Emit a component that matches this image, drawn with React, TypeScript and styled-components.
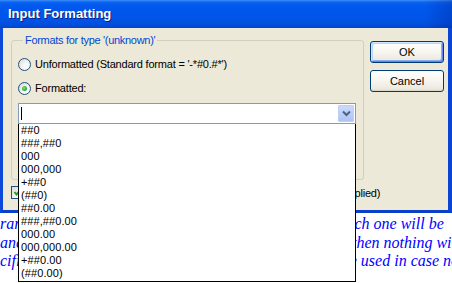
import React from "react";
import styled, { createGlobalStyle } from "styled-components";

const Global = createGlobalStyle`
  html, body { margin: 0; padding: 0; background: #ffffff; }
  * { box-sizing: border-box; }
`;

const UI = `"Liberation Sans", Arial, sans-serif`;

const Screen = styled.div`
  position: relative;
  width: 452px;
  height: 283px;
  overflow: hidden;
  background: #ffffff;
  font-family: ${UI};
  font-size: 11px;
  letter-spacing: -0.2px;
  color: #000;
`;

const Window = styled.div`
  display: flex;
  flex-direction: column;
  width: 452px;
`;

const TitleBar = styled.div`
  height: 28px;
  display: flex;
  align-items: center;
  padding: 0 0 1px 8px;
  background:
    linear-gradient(90deg, rgba(0,0,0,0) 0%, rgba(0,0,0,0) 94%, rgba(0,20,120,0.25) 100%),
    linear-gradient(180deg, #3d8ef8 0%, #0a62f0 8%, #0058ee 22%, #0055e8 60%, #0050e0 85%, #0842c8 100%);
  color: #ffffff;
  font-family: ${UI};
  font-weight: bold;
  font-size: 13px;
  letter-spacing: 0;
  text-shadow: 1px 1px 0 #0a1c8a;
`;

const Frame = styled.div`
  display: flex;
  gap: 6px;
  height: 185px;
  padding: 6px 4px 0 8px;
  background: #ece9d8;
  border-left: 3px solid #0b4ad8;
  border-right: 4px solid #0a44d2;
  border-bottom: 3px solid #0a3fc8;
`;

const MainColumn = styled.div`
  display: flex;
  flex-direction: column;
  width: 353px;
`;

const GroupBox = styled.fieldset`
  position: relative;
  margin: 0;
  height: 146px;
  padding: 5px 7px 0 6px;
  border: 1px solid #d0d0bf;
  border-radius: 3px;
  display: flex;
  flex-direction: column;
`;

const Legend = styled.legend`
  padding: 0 2px;
  margin-left: 5px;
  color: #0046d5;
  line-height: 13px;
  font-size: 11px;
  letter-spacing: -0.3px;
`;

const RadioRow = styled.label`
  display: flex;
  align-items: center;
  gap: 4px;
  height: 24px;
  white-space: nowrap;
`;

const RadioCircle = styled.span<{ $checked?: boolean }>`
  position: relative;
  width: 13px;
  height: 13px;
  flex: none;
  border-radius: 50%;
  border: 1px solid #1c5180;
  background: radial-gradient(circle at 65% 65%, #ffffff 0%, #f3f3ef 40%, #d6d5cc 100%);
  &::after {
    content: "";
    display: ${(p) => (p.$checked ? "block" : "none")};
    position: absolute;
    left: 3px;
    top: 3px;
    width: 5px;
    height: 5px;
    border-radius: 50%;
    background: radial-gradient(circle at 40% 40%, #8ae08a 0%, #3cb33c 50%, #1e8f1e 100%);
  }
`;

const ComboWrap = styled.div`
  position: relative;
  margin-top: 3px;
`;

const Combo = styled.div`
  display: flex;
  align-items: center;
  height: 21px;
  border: 1px solid #7f9db9;
  background: #ffffff;
  padding: 1px 1px 1px 2px;
`;

const Caret = styled.span`
  width: 1px;
  height: 13px;
  background: #000;
  margin-right: auto;
`;

const DropButton = styled.span`
  width: 16px;
  height: 17px;
  display: flex;
  align-items: center;
  justify-content: center;
  border-radius: 1px;
  background: linear-gradient(180deg, #cbd9fb 0%, #bccff8 50%, #aec4f4 100%);
  border: 1px solid #bfd0f6;
`;

const DropList = styled.ul`
  position: absolute;
  left: 0;
  top: 100%;
  margin: 0;
  width: 100%;
  height: 158px;
  list-style: none;
  padding: 0 0 0 2px;
  border: 1px solid #000;
  border-top: 0;
  background: #ffffff;
  z-index: 5;
`;

const ListItem = styled.li`
  height: 13px;
  line-height: 13px;
  font-size: 11px;
  letter-spacing: 0.1px;
  white-space: nowrap;
`;

const CheckRow = styled.label`
  display: flex;
  align-items: center;
  gap: 5px;
  margin-top: 6px;
  white-space: nowrap;
`;

const CheckBox = styled.span`
  position: relative;
  width: 13px;
  height: 13px;
  flex: none;
  border: 1px solid #1c5180;
  background: linear-gradient(135deg, #dcdcd7 0%, #ffffff 100%);
`;

const CheckMark = styled.svg`
  position: absolute;
  left: 0;
  top: 0;
`;

const ButtonColumn = styled.div`
  display: flex;
  flex-direction: column;
  gap: 7px;
  padding-top: 7px;
`;

const Button = styled.button<{ $default?: boolean }>`
  width: 74px;
  height: 22px;
  padding: 0;
  font-family: ${UI};
  font-size: 11px;
  color: #000;
  border: 1px solid #003c74;
  border-radius: 3px;
  background: linear-gradient(180deg, #ffffff 0%, #f6f5f0 50%, #ece9de 90%, #d6d0c5 100%);
  box-shadow: ${(p) =>
    p.$default
      ? "inset 1px 1px 0 #cee7ff, inset -1px -1px 0 #6982ee, inset 2px 2px 0 #bcd4f6, inset -2px -2px 0 #89adf4"
      : "none"};
`;

const Note = styled.div`
  padding-top: 2px;
  color: #0000ff;
  font-family: "Liberation Serif", "Times New Roman", serif;
  font-style: italic;
  font-size: 16px;
  letter-spacing: 0;
  line-height: 18.5px;
  white-space: nowrap;
`;

const formats = [
  "##0",
  "###,##0",
  "000",
  "000,000",
  "+##0",
  "(##0)",
  "##0.00",
  "###,##0.00",
  "000.00",
  "000,000.00",
  "+##0.00",
  "(##0.00)",
];

export default function App() {
  return (
    <>
      <Global />
      <Screen>
        <Window>
          <TitleBar>Input Formatting</TitleBar>
          <Frame>
            <MainColumn>
              <GroupBox>
                <Legend>Formats for type '(unknown)'</Legend>
                <RadioRow>
                  <RadioCircle />
                  Unformatted (Standard format = '-*#0.#*')
                </RadioRow>
                <RadioRow>
                  <RadioCircle $checked />
                  Formatted:
                </RadioRow>
                <ComboWrap>
                  <Combo>
                    <Caret />
                    <DropButton>
                      <svg width="9" height="7" viewBox="0 0 9 7">
                        <path d="M1 1.5 L4.5 5 L8 1.5" fill="none" stroke="#4d6185" strokeWidth="2" />
                      </svg>
                    </DropButton>
                  </Combo>
                  <DropList>
                    {formats.map((f) => (
                      <ListItem key={f}>{f}</ListItem>
                    ))}
                  </DropList>
                </ComboWrap>
              </GroupBox>
              <CheckRow>
                <CheckBox>
                  <CheckMark width="11" height="11" viewBox="0 0 11 11">
                    <path d="M2.5 5 L4.5 7.5 L8.5 2.5" fill="none" stroke="#21a121" strokeWidth="2" />
                  </CheckMark>
                </CheckBox>
                Use the format also for editing (otherwise only the display format is applied)
              </CheckRow>
            </MainColumn>
            <ButtonColumn>
              <Button $default>OK</Button>
              <Button>Cancel</Button>
            </ButtonColumn>
          </Frame>
        </Window>
        <Note>
          rary number formats can be entered into the list, of which one will be
          <br />
          ance below. If no format at all is selected from the list, then nothing will be
          <br />
          cified, then the format at the top of the list will again be used in case no other
        </Note>
      </Screen>
    </>
  );
}
